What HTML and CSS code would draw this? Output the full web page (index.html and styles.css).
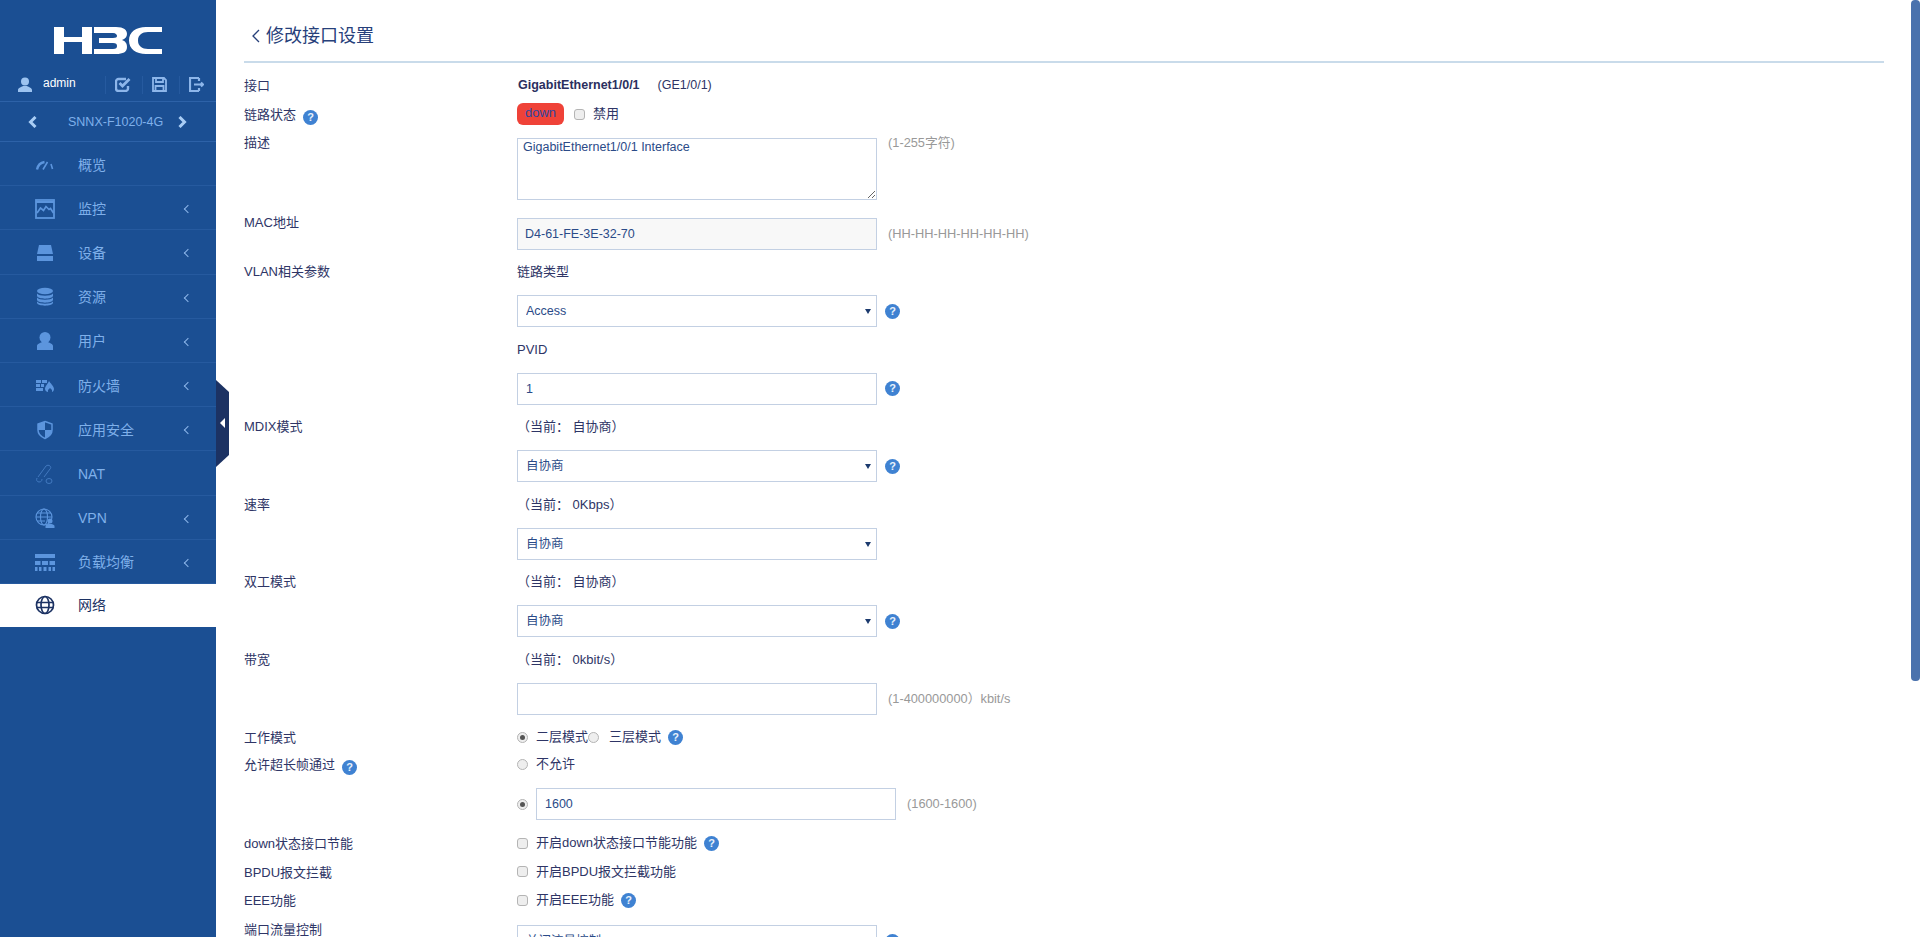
FILE: index.html
```html
<!DOCTYPE html>
<html lang="zh-CN">
<head>
<meta charset="utf-8">
<title>修改接口设置</title>
<link rel="stylesheet" href="styles.css">
</head>
<body>
<div class="app">
  <aside class="sidebar">
    <div class="brand">
      <svg class="logo" width="108" height="27" viewBox="0 0 108 27"><path fill="#fff" d="M0 0h10v10h18V0h10v27H28V15H10v12H0zM40 0h22c8 0 11 3 11 7 0 3-2 5-5 6 3 1 5 3 5 7 0 5-4 7-11 7H40v-5h19c3 0 4-1 4-3s-1-3-4-3H45v-5h14c3 0 4-1 4-2s-1-3-4-3H40zM108 0H92C82 0 75 5 75 13.500S82 27 92 27h16v-5H94c-6 0-10-3-10-8.500S88 5 94 5h14z"/></svg>
    </div>
    <div class="userbar">
      <svg class="u-icon" width="14" height="15" viewBox="0 0 14 15"><circle cx="7" cy="4.500" r="4" fill="#9cc3f0"/><path fill="#9cc3f0" d="M0 15v-2c0-2 3-3 5-4h4c2 1 5 2 5 4v2z"/></svg>
      <span class="username">admin</span>
      <span class="u-tool"><svg width="16" height="15" viewBox="0 0 16 15"><path fill="none" stroke="#8db6ea" stroke-width="2.400" d="M13 9v2.500a2.500 2.500 0 0 1-2.500 2.500h-7A2.500 2.500 0 0 1 1 11.500v-7A2.500 2.500 0 0 1 3.500 2H11"/><path fill="none" stroke="#8db6ea" stroke-width="2.800" d="M4.500 6l3 3 7-7"/></svg></span>
      <span class="u-tool"><svg width="15" height="15" viewBox="0 0 15 15"><path fill="none" stroke="#8db6ea" stroke-width="1.800" d="M1 1h11l2 2v11H1zM4 1v4h7V1M3.500 14V9h8v5"/></svg></span>
      <span class="u-tool"><svg width="15" height="15" viewBox="0 0 15 15"><path fill="none" stroke="#8db6ea" stroke-width="2.200" d="M10 1H1v13h9M10 14v-3M10 4V1"/><path fill="none" stroke="#8db6ea" stroke-width="2" d="M5 7.500h9M12 5.500l2 2-2 2"/></svg></span>
    </div>
    <div class="device">
      <svg width="9" height="12" viewBox="0 0 9 12"><path fill="none" stroke="#a9cdf5" stroke-width="3" d="M7.500 1L2.500 6l5 5"/></svg>
      <span class="device-name">SNNX-F1020-4G</span>
      <svg class="device-next" width="9" height="12" viewBox="0 0 9 12"><path fill="none" stroke="#a9cdf5" stroke-width="3" d="M1.500 1l5 5-5 5"/></svg>
    </div>
    <nav class="menu">
      <a class="item"><svg class="ico" width="20" height="20" viewBox="0 0 20 20"><path fill="none" stroke="#5c95dd" stroke-width="2.400" d="M2 14.500C3 10 6 7.500 9.500 7"/><path fill="none" stroke="#5c95dd" stroke-width="1.600" d="M8 14.500L12.500 7M16 9l1.500 5"/></svg><span class="name">概览</span></a>
      <a class="item more"><svg class="ico" width="20" height="20" viewBox="0 0 20 20"><rect x="1" y="1" width="18" height="18" fill="none" stroke="#5c95dd" stroke-width="1.800"/><path fill="none" stroke="#5c95dd" stroke-width="1.700" d="M2 14l3.500-5 3 2.500 2.500-4 3 3 1.500-1 3 4.500"/><path stroke="#5c95dd" stroke-width="2" d="M1 3h18"/></svg><span class="name">监控</span></a>
      <a class="item more"><svg class="ico" width="20" height="20" viewBox="0 0 20 20"><path fill="#5c95dd" d="M4 2h12l2 9H2z"/><path fill="#5c95dd" d="M2 13h16v5H2z"/></svg><span class="name">设备</span></a>
      <a class="item more"><svg class="ico" width="20" height="20" viewBox="0 0 20 20"><g fill="#5c95dd"><ellipse cx="10" cy="4" rx="8" ry="3.200"/><path d="M2 6.500c2 3 14 3 16 0v2.500c-1 3.500-15 3.500-16 0zM2 10.500c2 3 14 3 16 0v2.500c-1 3.500-15 3.500-16 0zM2 14.500c2 3 14 3 16 0v1.500c-1 3.500-15 3.500-16 0z"/></g></svg><span class="name">资源</span></a>
      <a class="item more"><svg class="ico" width="20" height="20" viewBox="0 0 20 20"><circle cx="10" cy="6.500" r="5.500" fill="#5c95dd"/><path fill="#5c95dd" d="M2 19v-4c0-2 3-3 5-4h6c2 1 5 2 5 4v4z"/></svg><span class="name">用户</span></a>
      <a class="item more"><svg class="ico" width="20" height="20" viewBox="0 0 20 20"><g fill="#5c95dd"><path d="M1 4h5v3H1zM7 4h5v3H7zM1 8h4v3H1zM6 8h3v3H6zM1 12h7v3H1z"/><path d="M14 5c1 2 5 5 5 8 0 2-1.500 3-2 3v-2l-2-2-2 2v2c-1 0-3-1-3-3 0-3 3-5 4-8z"/></g></svg><span class="name">防火墙</span></a>
      <a class="item more"><svg class="ico" width="20" height="20" viewBox="0 0 20 20"><path fill="none" stroke="#5c95dd" stroke-width="1.500" d="M10 1.500l7 2.500v6c0 4-3.500 7-7 8.500-3.500-1.500-7-4.500-7-8.500V4z"/><path fill="#5c95dd" d="M10 1.500v8.500H3V4zM10 10h7c0 4-3.500 7-7 8.500z"/></svg><span class="name">应用安全</span></a>
      <a class="item"><svg class="ico dim" width="20" height="20" viewBox="0 0 20 20"><path fill="none" stroke="#5c95dd" stroke-width="1" d="M3 13l8-11c1-1 3-1 4 0s1 2 0 3L9 13M2 14c-1 2 0 4 2 4s3-1 3-3M11 17a3 2.500 0 1 0 6 0 3 2.500 0 1 0-6 0"/></svg><span class="name">NAT</span></a>
      <a class="item more"><svg class="ico" width="20" height="20" viewBox="0 0 20 20"><g fill="none" stroke="#5c95dd" stroke-width="1.100"><circle cx="9" cy="9" r="8"/><ellipse cx="9" cy="9" rx="3.500" ry="8"/><path d="M1 9h16M2 5h14M2 13h8"/></g><circle cx="15" cy="13" r="2.500" fill="#5c95dd"/><path fill="#5c95dd" d="M10.500 20v-2c0-1 2-2 3-2h3c1 0 3 1 3 2v2z"/></svg><span class="name">VPN</span></a>
      <a class="item more"><svg class="ico" width="20" height="20" viewBox="0 0 20 20"><path fill="#5c95dd" d="M0 2h20v4H0zM0 9h5.500v4H0zM7 9h6v4H7zM14.500 9H20v4h-5.500zM0 15h2.500v4H0zM4 15h2.500v4H4zM8.500 15h3v4h-3zM13.500 15H16v4h-2.500zM17.500 15H20v4h-2.500z"/></svg><span class="name">负载均衡</span></a>
      <a class="item active"><svg class="ico" width="20" height="20" viewBox="0 0 20 20"><g fill="none" stroke="#1c3263" stroke-width="1.700"><circle cx="10" cy="10" r="8.500"/><ellipse cx="10" cy="10" rx="4" ry="8.500"/><path d="M1.500 7.500h17M1.500 12.500h17"/></g></svg><span class="name">网络</span></a>
    </nav>
  </aside>
  <div class="collapse">
    <svg width="13" height="87" viewBox="0 0 13 87"><path fill="#1c3263" d="M0 0l13 12v63L0 87z"/><path fill="#fff" d="M9 38v10l-5-5z"/></svg>
  </div>
  <main class="main">
    <div class="content">
      <header class="page-head"><svg width="9" height="14" viewBox="0 0 9 14"><path fill="none" stroke="#27407a" stroke-width="1.300" d="M8 1L2 7l6 6"/></svg><h1 class="page-title">修改接口设置</h1></header>

      <div class="row r-iface"><div class="lab flat">接口</div><div class="val line"><b class="iface">GigabitEthernet1/0/1</b><span class="iface-short">(GE1/0/1)</span></div></div>

      <div class="row r-link"><div class="lab low">链路状态<span class="help l-help">?</span></div><div class="val line"><span class="badge">down</span><input class="chk c-dis" type="checkbox"><span>禁用</span></div></div>

      <div class="row r-desc"><div class="lab">描述</div><div class="val line top"><textarea class="area">GigabitEthernet1/0/1 Interface</textarea><span class="hint h-top">(1-255字符)</span></div></div>

      <div class="row r-mac"><div class="lab">MAC地址</div><div class="val line"><input class="txt ro" type="text" value="D4-61-FE-3E-32-70" readonly><span class="hint">(HH-HH-HH-HH-HH-HH)</span></div></div>

      <div class="row"><div class="lab flat">VLAN相关参数</div><div class="val">
        <div class="cap">链路类型</div>
        <div class="line field"><span class="sel"><select><option>Access</option></select></span><span class="help">?</span></div>
        <div class="cap">PVID</div>
        <div class="line field"><input class="txt" type="text" value="1"><span class="help">?</span></div>
      </div></div>

      <div class="row"><div class="lab flat">MDIX模式</div><div class="val">
        <div class="cap">（当前： 自协商）</div>
        <div class="line field"><span class="sel"><select><option>自协商</option></select></span><span class="help">?</span></div>
      </div></div>

      <div class="row"><div class="lab flat">速率</div><div class="val">
        <div class="cap">（当前： 0Kbps）</div>
        <div class="line field"><span class="sel"><select><option>自协商</option></select></span></div>
      </div></div>

      <div class="row"><div class="lab flat">双工模式</div><div class="val">
        <div class="cap">（当前： 自协商）</div>
        <div class="line field"><span class="sel"><select><option>自协商</option></select></span><span class="help">?</span></div>
      </div></div>

      <div class="row r-band"><div class="lab flat">带宽</div><div class="val">
        <div class="cap">（当前： 0kbit/s）</div>
        <div class="line field last"><input class="txt" type="text"><span class="hint">(1-400000000）kbit/s</span></div>
      </div></div>

      <div class="row r-mode"><div class="lab flat">工作模式</div><div class="val line"><input class="rad on" type="radio" name="mode" checked><span class="t-mode">二层模式</span><input class="rad r2" type="radio" name="mode"><span class="t-mode2">三层模式</span><span class="help h-near">?</span></div></div>

      <div class="row r-jumbo"><div class="lab flat">允许超长帧通过<span class="help l-help">?</span></div><div class="val">
        <div class="line r-no"><input class="rad" type="radio" name="jumbo"><span class="t-opt">不允许</span></div>
        <div class="line"><input class="rad on" type="radio" name="jumbo" checked><input class="txt" type="text" value="1600"><span class="hint">(1600-1600)</span></div>
      </div></div>

      <div class="row r-opt"><div class="lab flat">down状态接口节能</div><div class="val line"><input class="chk" type="checkbox"><span class="t-opt">开启down状态接口节能功能</span><span class="help h-near">?</span></div></div>
      <div class="row r-opt"><div class="lab flat">BPDU报文拦截</div><div class="val line"><input class="chk" type="checkbox"><span class="t-opt">开启BPDU报文拦截功能</span></div></div>
      <div class="row r-eee"><div class="lab flat">EEE功能</div><div class="val line"><input class="chk" type="checkbox"><span class="t-opt">开启EEE功能</span><span class="help h-near">?</span></div></div>

      <div class="row"><div class="lab">端口流量控制</div><div class="val line"><span class="sel"><select><option>关闭流量控制</option></select></span><span class="help">?</span></div></div>
    </div>
  </main>
  <div class="thumb"></div>
</div>
</body>
</html>
```
FILE: styles.css
```css
* { box-sizing: border-box; }
html, body { margin: 0; height: 100%; overflow: hidden; }
body {
  font: 13px/20px "Liberation Sans", "Noto Sans CJK SC", sans-serif;
  color: #2e3566;
  background: #fff;
}
.app { display: flex; height: 937px; position: relative; }

/* sidebar */
.sidebar { width: 216px; flex: none; background: #1b4f93; }
.brand { height: 71px; padding: 27px 0 0 54px; }
.logo { display: block; }
.userbar {
  height: 31px;
  display: flex;
  align-items: center;
  padding: 0 0 3px 18px;
  border-bottom: 1px solid #2d62a8;
}
.username { width: 62px; margin-left: 11px; color: #fff; font-size: 12px; position: relative; top: -2px; }
.u-tool { width: 37px; height: 18px; display: flex; align-items: center; padding-left: 9px; border-left: 1px solid #265a9f; }
.device {
  height: 40px;
  display: flex;
  align-items: center;
  padding: 0 29px 0 28px;
  border-bottom: 1px solid #2d62a8;
}
.device-name { margin-left: 31px; font-size: 12.500px; color: #7fb0ea; }
.device-next { margin-left: auto; }
.menu { display: flex; flex-direction: column; }
.item {
  height: 44.200px;
  display: flex;
  align-items: center;
  padding: 2px 0 0 35px;
  color: #7fb0ea;
  font-size: 14px;
  border-bottom: 1px solid #265a9f;
  position: relative;
}
.item .ico { flex: none; }
.item .dim { opacity: .6; }
.name { margin-left: 23px; }
.item.more::after {
  content: "";
  position: absolute;
  left: 185px;
  top: 20px;
  width: 5px;
  height: 5px;
  border-left: 1px solid #8db6ea;
  border-bottom: 1px solid #8db6ea;
  transform: rotate(45deg);
}
.item.active { background: #fff; color: #1c3263; border-bottom: 0; height: 43px; padding-top: 0; }
.collapse { position: absolute; left: 216px; top: 380px; width: 13px; height: 87px; }
.collapse svg { display: block; }
.thumb {
  position: absolute;
  right: 0;
  top: 0;
  width: 9px;
  height: 681px;
  background: #4a72ad;
  border-radius: 4px;
}

/* main */
.main { flex: 1; min-width: 0; height: 937px; overflow: hidden; }
.content { padding: 0 36px 0 28px; }
.page-head {
  height: 63px;
  display: flex;
  align-items: center;
  padding: 10px 0 0 7px;
  border-bottom: 2px solid #c9dbea;
  margin-bottom: 12px;
}
.page-title { margin: 0 0 0 6px; font-size: 18px; font-weight: 400; color: #27407a; }

/* form */
.row { display: grid; grid-template-columns: 273px 1fr; align-items: start; }
.lab { margin-top: -6px; padding-top: 1px; }
.lab.flat { margin-top: 0; }
.lab.low { margin-top: 2px; padding-top: 0; }
.line { display: flex; align-items: center; }
.line.top { align-items: flex-start; }
.r-iface { height: 20px; margin-bottom: 8px; }
.r-link { height: 22px; margin-bottom: 13px; }
.r-desc { height: 62px; margin-bottom: 18px; }
.r-mac { height: 32px; margin-bottom: 11px; }
.iface { color: #2b2f60; font-size: 12.500px; margin-left: 1px; }
.iface-short { margin-left: 18px; font-size: 12.500px; }
.badge {
  width: 47px;
  height: 22px;
  border-radius: 6px;
  background: #ef4238;
  color: #2f46a0;
  text-align: center;
  line-height: 20px;
}
.chk, .rad {
  appearance: none;
  width: 11px;
  height: 11px;
  margin: 0;
  flex: none;
  background: #eee;
  border: 1px solid #b4b4b4;
  border-radius: 3px;
}
.rad { border-radius: 50%; position: relative; }
.rad.on::after {
  content: "";
  position: absolute;
  left: 2px;
  top: 2px;
  width: 5px;
  height: 5px;
  border-radius: 50%;
  background: #555;
}
.c-dis { margin: 0 8px 0 10px; }
.area {
  width: 360px;
  height: 62px;
  padding: 0 5px;
  margin: 0;
  font: inherit;
  font-size: 12.500px;
  line-height: 16px;
  color: #2b4b88;
  border: 1px solid #c3d0e3;
  border-radius: 0;
  outline: 0;
  display: block;
}
.txt {
  width: 360px;
  height: 32px;
  margin: 0;
  padding: 0 8px;
  font: inherit;
  font-size: 12.500px;
  color: #2b4b88;
  border: 1px solid #c3d0e3;
  border-radius: 0;
  outline: 0;
  flex: none;
}
.txt.ro { background: #f8f8f8; padding-left: 7px; }
.hint { margin-left: 11px; color: #999; white-space: nowrap; font-size: 12.800px; }
.h-top { margin-top: -5px; }
.cap { height: 20px; margin-bottom: 14px; padding-top: 1px; }
.field { margin-bottom: 11.500px; }
.field.last { margin-bottom: 0; }
.sel { position: relative; display: block; width: 360px; height: 32px; flex: none; }
.sel select {
  appearance: none;
  display: block;
  width: 100%;
  height: 32px;
  margin: 0;
  padding: 0 8px;
  font: inherit;
  font-size: 12.500px;
  color: #2b4b88;
  background: #fff;
  border: 1px solid #c3d0e3;
  border-radius: 0;
  outline: 0;
}
.sel::after {
  content: "";
  position: absolute;
  right: 6px;
  top: 14px;
  border-left: 3.500px solid transparent;
  border-right: 3.500px solid transparent;
  border-top: 5px solid #1c3a6e;
}
.help {
  width: 15px;
  height: 15px;
  margin-left: 8px;
  flex: none;
  display: inline-flex;
  align-items: center;
  justify-content: center;
  border-radius: 50%;
  background: #3f82d2;
  color: #e8f1fb;
  font-size: 11px;
  font-weight: 700;
  line-height: 15px;
}
.l-help { margin-left: 7px; position: relative; top: 2px; }
.h-near { margin-left: 7px; }
.r-band { margin-bottom: 12.500px; }
.r-mode { height: 20px; margin-bottom: 7px; }
.t-mode { margin-left: 8px; width: 52px; white-space: nowrap; }
.t-mode2 { margin-left: 10px; }
.rad.r2 { margin-left: 0; }
.t-opt { margin-left: 8px; }
.r-jumbo { margin-bottom: 13px; }
.r-no { height: 20px; margin-bottom: 14px; }
.r-jumbo .txt { margin-left: 8px; }
.r-opt { height: 20px; margin-bottom: 8.500px; }
.r-eee { height: 20px; margin-bottom: 15px; }
```
